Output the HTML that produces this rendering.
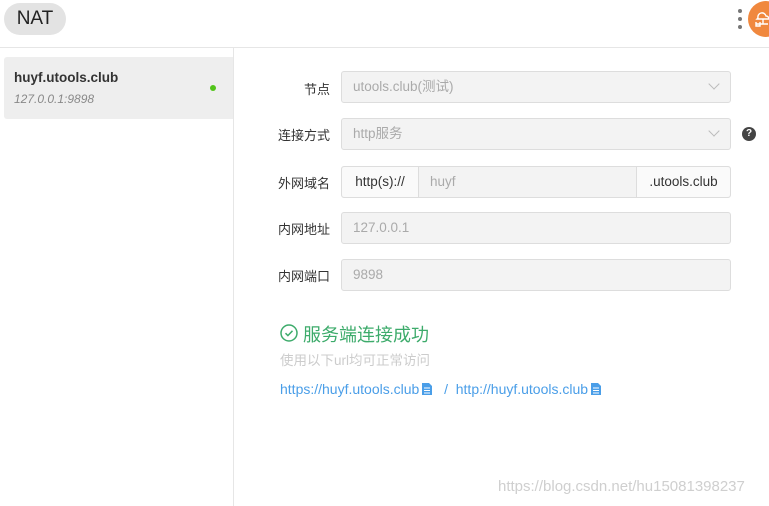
<!DOCTYPE html>
<html><head><meta charset="utf-8"><style>
*{box-sizing:border-box;margin:0;padding:0}
body{width:769px;height:506px;background:#fff;font-family:"Liberation Sans","Noto Sans CJK SC",sans-serif;position:relative;overflow:hidden;color:#333}
.abs{position:absolute}
.nat{left:4px;top:3px;width:62px;height:32px;border-radius:16px;background:#e3e3e3;font-size:19px;line-height:32px;text-align:center;color:#222}
.hr{left:0;top:47px;width:769px;height:1px;background:#e6e6e6}
.vr{left:233px;top:48px;width:1px;height:458px;background:#e6e6e6}
.item{left:4px;top:57px;width:229px;height:62px;background:#eeeeee;border-radius:3px 0 0 3px}
.lbl{font-size:13px;color:#333;width:60px;text-align:right;left:270px}
.box{left:341px;width:390px;height:32px;border:1px solid #ddd;border-radius:3px;background:#f3f3f3;font-size:13.5px;color:#aaa;line-height:30px;padding-left:11px}
.chev{position:absolute;right:12px;top:8px;width:8px;height:8px;border-right:1px solid #bbb;border-bottom:1px solid #bbb;transform:rotate(45deg)}
.cp{display:inline-block;vertical-align:-2px;margin:0 3px 0 2px}
</style></head><body>
<div class="abs nat">NAT</div>
<div class="abs" style="left:738px;top:9px;width:4px;height:4px;border-radius:2px;background:#777"></div>
<div class="abs" style="left:738px;top:17px;width:4px;height:4px;border-radius:2px;background:#777"></div>
<div class="abs" style="left:738px;top:25px;width:4px;height:4px;border-radius:2px;background:#777"></div>
<div class="abs" style="left:748px;top:1px;width:36px;height:36px;border-radius:18px;background:#f0883e"></div>
<svg class="abs" style="left:754px;top:8px" width="15" height="22" viewBox="0 0 15 22"><path d="M4 10a4 4 0 0 1 8-2a3 3 0 0 1 3 3H3z M9 11v5 M2 16h12 M2 14v4h4v-4" fill="none" stroke="#fff" stroke-width="1.4"/></svg>
<div class="abs hr"></div><div class="abs vr"></div>
<div class="abs item">
<div class="abs" style="left:10px;top:13px;font-size:13.5px;font-weight:bold;color:#333">huyf.utools.club</div>
<div class="abs" style="left:10px;top:35px;font-size:12px;font-style:italic;color:#888">127.0.0.1:9898</div>
<div class="abs" style="left:206px;top:28px;width:6px;height:6px;border-radius:3px;background:#52c41a"></div>
</div>
<div class="abs lbl" style="top:79px">节点</div>
<div class="abs box" style="top:71px">utools.club(测试)<span class="chev"></span></div>
<div class="abs lbl" style="top:125px">连接方式</div>
<div class="abs box" style="top:118px">http服务<span class="chev"></span></div>
<div class="abs" style="left:742px;top:127px;width:14px;height:14px;border-radius:7px;background:#444;color:#fff;font-size:10px;font-weight:bold;text-align:center;line-height:14px">?</div>
<div class="abs lbl" style="top:173px">外网域名</div>
<div class="abs box" style="top:166px;padding:0;background:#f3f3f3">
<div class="abs" style="left:0;top:0;width:77px;height:30px;background:#fafafa;border-right:1px solid #ddd;color:#333;text-align:center;border-radius:3px 0 0 3px">http(s)://</div>
<div class="abs" style="left:88px;top:0;color:#aaa">huyf</div>
<div class="abs" style="left:294px;top:0;width:94px;height:30px;background:#fafafa;border-left:1px solid #ddd;color:#333;text-align:center;border-radius:0 3px 3px 0">.utools.club</div>
</div>
<div class="abs lbl" style="top:219px">内网地址</div>
<div class="abs box" style="top:212px">127.0.0.1</div>
<div class="abs lbl" style="top:266px">内网端口</div>
<div class="abs box" style="top:259px">9898</div>
<svg class="abs" style="left:280px;top:324px" width="18" height="18" viewBox="0 0 18 18"><circle cx="9" cy="9" r="8" fill="none" stroke="#3dab6b" stroke-width="1.5"/><path d="M5.5 9.2l2.4 2.4 4.6-4.8" fill="none" stroke="#3dab6b" stroke-width="1.5"/></svg>
<div class="abs" style="left:303px;top:321px;font-size:18px;color:#3dab6b">服务端连接成功</div>
<div class="abs" style="left:280px;top:349px;font-size:13.5px;color:#ccc">使用以下url均可正常访问</div>
<div class="abs" style="left:280px;top:381px;font-size:14px;color:#4a9ee8;white-space:nowrap">https://huyf.utools.club<svg class="cp" width="12" height="14" viewBox="0 0 12 14"><path d="M1 1h7l3 3v9H1z" fill="#4a9ee8"/><path d="M3 6h6M3 8.5h6M3 11h6" stroke="#fff" stroke-width="1"/></svg> &nbsp;/ &nbsp;http://huyf.utools.club<svg class="cp" width="12" height="14" viewBox="0 0 12 14"><path d="M1 1h7l3 3v9H1z" fill="#4a9ee8"/><path d="M3 6h6M3 8.5h6M3 11h6" stroke="#fff" stroke-width="1"/></svg></div>
<div class="abs" style="left:498px;top:478px;font-size:15px;color:#cfcfcf;white-space:nowrap">https://blog.csdn.net/hu15081398237</div>
</body></html>
